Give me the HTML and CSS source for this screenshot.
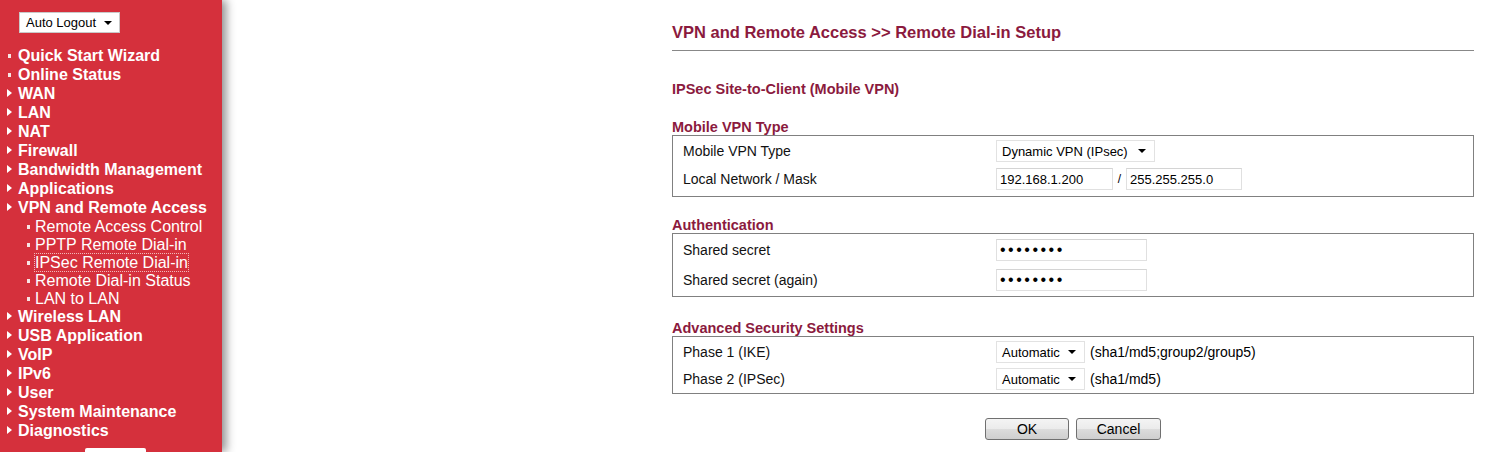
FILE: index.html
```html
<!DOCTYPE html>
<html lang="en">
<head>
  <meta charset="UTF-8">
  <title>VPN and Remote Access &gt;&gt; Remote Dial-in Setup</title>
  <link rel="stylesheet" href="styles.css">
</head>
<body>

<div class="sidebar">
  <div class="fake-select logout">Auto Logout<span class="arrow"></span></div>

  <ul class="menu">
    <li class="dot">Quick Start Wizard</li>
    <li class="dot">Online Status</li>
    <li class="tri">WAN</li>
    <li class="tri">LAN</li>
    <li class="tri">NAT</li>
    <li class="tri">Firewall</li>
    <li class="tri">Bandwidth Management</li>
    <li class="tri">Applications</li>
    <li class="tri">VPN and Remote Access</li>
    <li class="sub first-sub">Remote Access Control</li>
    <li class="sub">PPTP Remote Dial-in</li>
    <li class="sub"><span class="focused">IPSec Remote Dial-in</span></li>
    <li class="sub">Remote Dial-in Status</li>
    <li class="sub last-sub">LAN to LAN</li>
    <li class="tri">Wireless LAN</li>
    <li class="tri">USB Application</li>
    <li class="tri">VoIP</li>
    <li class="tri">IPv6</li>
    <li class="tri">User</li>
    <li class="tri">System Maintenance</li>
    <li class="tri">Diagnostics</li>
  </ul>

  <div class="logout-btn"></div>
</div>

<div class="main">
  <h1 class="page-title">VPN and Remote Access &gt;&gt; Remote Dial-in Setup</h1>

  <h2 class="subtitle">IPSec Site-to-Client (Mobile VPN)</h2>

  <!-- Mobile VPN type -->
  <h3 class="section-title first">Mobile VPN Type</h3>
  <div class="box box-type">
    <div class="row">
      <span class="label">Mobile VPN Type</span>
      <div class="fake-select w-type">Dynamic VPN (IPsec)<span class="arrow"></span></div>
    </div>
    <div class="row">
      <span class="label">Local Network / Mask</span>
      <input class="field w-ip" type="text" value="192.168.1.200">
      <span class="slash">/</span>
      <input class="field w-mask" type="text" value="255.255.255.0">
    </div>
  </div>

  <!-- Authentication -->
  <h3 class="section-title">Authentication</h3>
  <div class="box box-auth">
    <div class="row">
      <span class="label">Shared secret</span>
      <input class="field w-pass" type="password" value="12345678">
    </div>
    <div class="row">
      <span class="label">Shared secret (again)</span>
      <input class="field w-pass" type="password" value="12345678">
    </div>
  </div>

  <!-- Advanced -->
  <h3 class="section-title last">Advanced Security Settings</h3>
  <div class="box box-adv">
    <div class="row">
      <span class="label">Phase 1 (IKE)</span>
      <div class="fake-select w-auto">Automatic<span class="arrow"></span></div>
      <span class="note">(sha1/md5;group2/group5)</span>
    </div>
    <div class="row">
      <span class="label">Phase 2 (IPSec)</span>
      <div class="fake-select w-auto">Automatic<span class="arrow"></span></div>
      <span class="note">(sha1/md5)</span>
    </div>
  </div>

  <div class="buttons">
    <button class="btn btn-ok">OK</button>
    <button class="btn btn-cancel">Cancel</button>
  </div>
</div>

</body>
</html>
```

FILE: styles.css
```css
html, body {
  margin: 0;
  padding: 0;
  height: 100%;
  overflow: hidden;
}

body {
  display: flex;
  background: #fff;
  font-family: "Liberation Sans", Arial, sans-serif;
  color: #000;
}

/* Left red menu */
.sidebar {
  flex: 0 0 auto;
  width: 222px;
  min-height: 100%;
  background-color: #d5303c;
  box-shadow: 4px 0 9px rgba(0, 0, 0, 0.45);
  padding-top: 12px;
  box-sizing: border-box;
  position: relative;
  z-index: 1;
}

.fake-select {
  display: flex;
  align-items: center;
  justify-content: space-between;
  box-sizing: border-box;
  height: 22px;
  background: #fff;
  border: 1px solid #e2e2e2;
  font-size: 13px;
  padding: 0 8px 0 5px;
  color: #000;
}

.fake-select .arrow {
  width: 0;
  height: 0;
  border-left: 4px solid transparent;
  border-right: 4px solid transparent;
  border-top: 4px solid #000;
}

.logout {
  width: 101px;
  height: 21px;
  margin-left: 19px;
  border-color: #c9c9c9;
  padding: 0 7px 0 6px;
}

.menu {
  list-style: none;
  margin: 13px 0 0 0;
  padding: 0;
}

.menu li {
  color: #fff;
  font-size: 16px;
  font-weight: bold;
  line-height: 19px;
  padding-left: 18px;
  position: relative;
  white-space: nowrap;
}

.menu li.dot::before {
  content: "";
  position: absolute;
  left: 8px;
  top: 8px;
  width: 3px;
  height: 4px;
  background: #f8e4e4;
}

.menu li.tri::before {
  content: "";
  position: absolute;
  left: 7px;
  top: 5px;
  border-top: 4px solid transparent;
  border-bottom: 4px solid transparent;
  border-left: 5px solid #fff;
}

.menu li.sub {
  font-weight: normal;
  line-height: 18px;
  padding-left: 35px;
}

.menu li.first-sub {
  margin-top: 1px;
}

.menu li.last-sub {
  margin-bottom: -1px;
}

.menu li.sub::before {
  content: "";
  position: absolute;
  left: 27px;
  top: 7px;
  width: 3px;
  height: 4px;
  background: #f8e4e4;
}

.focused {
  outline: 1px dotted #f0b8b8;
}

.logout-btn {
  width: 61px;
  height: 22px;
  margin: 8px 0 0 85px;
  background: #fff;
  border-radius: 2px;
}

/* Main content */
.main {
  flex: 0 0 auto;
  width: 802px;
  margin-left: 450px;
  padding-top: 22px;
}

.page-title {
  margin: 0;
  font-size: 16.5px;
  line-height: 20px;
  font-weight: bold;
  color: #8b1a3e;
  padding-bottom: 8px;
  border-bottom: 1px solid #888;
}

.subtitle {
  margin: 30px 0 0 0;
  font-size: 14.5px;
  line-height: 17px;
  color: #8b1a3e;
}

.section-title {
  margin: 20px 0 0 0;
  font-size: 14.5px;
  line-height: 16px;
  color: #8b1a3e;
}

.section-title.first {
  margin-top: 21px;
}

.section-title.last {
  margin-top: 23px;
}

.box {
  border: 1px solid #808080;
  padding: 4px 0 6px 10px;
  display: flex;
  flex-direction: column;
  gap: 6px;
}

.box-auth {
  padding: 5px 0 5px 10px;
  gap: 8px;
}

.box-adv {
  padding: 4px 0 3px 10px;
  gap: 5px;
}

.row {
  display: flex;
  align-items: center;
  height: 22px;
  font-size: 14px;
}

.label {
  flex: 0 0 313px;
  color: #111;
}

.field {
  box-sizing: border-box;
  height: 22px;
  border: 1px solid #e0e0e0;
  border-top-color: #d4d4d4;
  font-family: "Liberation Sans", Arial, sans-serif;
  font-size: 13px;
  padding: 0 3px;
  margin: 0;
  color: #000;
  outline: none;
}

.field[type="password"] {
  font-size: 16px;
  letter-spacing: 2.5px;
}

.w-type { width: 159px; }
.w-ip { width: 117px; }
.w-mask { width: 116px; }
.w-pass { width: 151px; }
.w-auto { width: 89px; }

.slash {
  width: 13px;
  text-align: center;
  font-size: 12px;
}

.note {
  margin-left: 5px;
}

.buttons {
  display: flex;
  justify-content: center;
  gap: 7px;
  margin-top: 24px;
}

.btn {
  height: 22px;
  box-sizing: border-box;
  border: 1px solid #707070;
  border-radius: 3px;
  background: linear-gradient(#f4f4f4 0%, #ebebeb 50%, #dcdcdc 51%, #cfcfcf 100%);
  font-family: "Liberation Sans", Arial, sans-serif;
  font-size: 14px;
  color: #000;
  padding: 0;
}

.btn-ok { width: 84px; }
.btn-cancel { width: 85px; }
```
